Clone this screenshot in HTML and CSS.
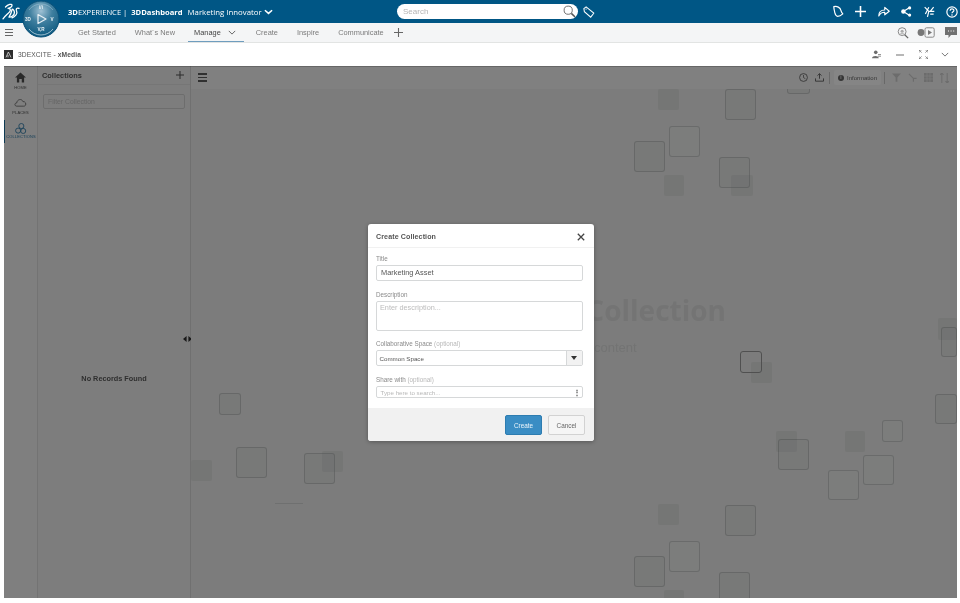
FILE: index.html
```html
<!DOCTYPE html>
<html lang="en">
<head>
<meta charset="utf-8">
<title>3DEXPERIENCE | 3DDashboard</title>
<link rel="stylesheet" href="styles.css">
</head>
<body>
<div class="page">
  <header class="topbar">
    <div class="brand">
      <svg class="ds-logo" viewBox="0 0 20 20" width="20" height="20"><g fill="none" stroke="#fff" stroke-width="1.3" stroke-linecap="round" stroke-linejoin="round"><path d="M4.5 5 C7 2.5 11 1.4 11 3.2 C11 5 8.5 6 7 6.4 C9.5 6.4 10 8 8.6 9.8 C7 11.8 4.4 13.6 2 16.8"/><path d="M11.2 7.2 C10.6 10 9.6 12.6 8 15.2 C11 15.4 13.4 13 13.4 10.4 C13.4 8.4 12 7.2 11.2 7.2"/><path d="M18 6.4 C16 5.6 14.8 6.6 15.4 8.2 C16.2 10 16.4 11 15 12.8 C14 14 12.6 15.2 11 15.8"/></g></svg>
      <svg class="compass" viewBox="0 0 38 38" width="38" height="38">
        <defs><radialGradient id="cg" cx="50%" cy="28%" r="70%"><stop offset="0" stop-color="#9fc1d4"/><stop offset=".45" stop-color="#3f7f9f"/><stop offset="1" stop-color="#0f5a80"/></radialGradient></defs>
        <circle cx="19" cy="19" r="18" fill="url(#cg)" stroke="#0a5078" stroke-width="1"/>
        <path d="M7 10 A15 15 0 0 1 31 10" fill="none" stroke="#cfe0ea" stroke-width=".5" opacity=".7"/>
        <path d="M7 29 A15 15 0 0 0 31 29" fill="none" stroke="#d8e8f0" stroke-width=".7"/>
        <path d="M16 14.5 L24 19 L16 23.5 Z" fill="none" stroke="#e7f0f5" stroke-width="1.2" stroke-linejoin="round"/>
        <text x="6" y="21" class="cp">3D</text><text x="30" y="21" class="cp">V</text><text x="19" y="9" class="cp">i/i</text><text x="19" y="31" class="cp">V,R</text>
      </svg>
    </div>
    <div class="product"><b>3D</b>EXPERIENCE | <b class="dash">3DDashboard</b><span class="dash-name">Marketing Innovator</span>
      <svg class="chev" viewBox="0 0 10 6" width="9" height="6"><path d="M1 1 L5 4.6 L9 1" fill="none" stroke="#fff" stroke-width="1.7"/></svg>
    </div>
    <div class="search"><span>Search</span>
      <svg viewBox="0 0 14 14" width="13" height="13"><circle cx="5.6" cy="5.6" r="4.4" fill="none" stroke="#666" stroke-width="1"/><path d="M9 9 L13 13" stroke="#555" stroke-width="1.6"/></svg>
    </div>
    <svg class="tag" viewBox="0 0 14 14" width="12" height="12"><path d="M1 3 L3.6 1 L12.6 8.4 L9 13 L1.6 6.6 Z" fill="none" stroke="#fff" stroke-width="1.2"/><circle cx="3.6" cy="3.6" r=".7" fill="#fff"/></svg>
    <div class="top-icons">
      <svg viewBox="0 0 16 16" width="12" height="13"><path d="M2.4 1.6 C6.6 .4 11 2.6 12 6.8 C12.4 8.6 13.4 10 14.4 11.2 C12.4 13 9.8 14.4 7.4 14.4 C5 14.4 4.4 12 3.8 9.8 C3.2 7.4 2.4 4 2.4 1.6 Z" fill="none" stroke="#fff" stroke-width="1.6" stroke-linejoin="round"/></svg>
      <svg viewBox="0 0 14 14" width="11" height="11"><path d="M7 0 V14 M0 7 H14" stroke="#fff" stroke-width="2"/></svg>
      <svg viewBox="0 0 16 14" width="12" height="11"><path d="M1 13 C1 7 4 5 9 5 V1.5 L15 6.6 L9 11.4 V8 C6 8 3 9 1 13 Z" fill="none" stroke="#fff" stroke-width="1.5" stroke-linejoin="round"/></svg>
      <svg viewBox="0 0 14 14" width="11" height="11"><path d="M3 7 L11 2 M3 7 L11 12" stroke="#fff" stroke-width="1.6"/><circle cx="3" cy="7" r="2.8" fill="#fff"/><circle cx="11" cy="2.4" r="2" fill="#fff"/><circle cx="11" cy="11.6" r="2" fill="#fff"/></svg>
      <svg viewBox="0 0 16 16" width="11" height="12"><path d="M1 1 L7 7 M7 1 L2 11 M7 7 L5 15 M7 7 H15 M9 7 L14 1 M9 11 H14" fill="none" stroke="#fff" stroke-width="1.7"/></svg>
      <svg viewBox="0 0 14 14" width="12" height="12"><circle cx="7" cy="7" r="6" fill="none" stroke="#fff" stroke-width="1.4"/><path d="M4.8 5.4 C4.8 2.8 9.2 2.8 9.2 5.2 C9.2 6.8 7 6.8 7 8.6" fill="none" stroke="#fff" stroke-width="1.4"/><circle cx="7" cy="10.6" r=".9" fill="#fff"/></svg>
    </div>
  </header>

  <nav class="tabs">
    <div class="burger"><i></i><i></i><i></i></div>
    <ul class="tab-list">
      <li>Get Started</li>
      <li>What´s New</li>
      <li class="active">Manage<svg viewBox="0 0 10 6" width="8" height="5"><path d="M1 1 L5 5 L9 1" fill="none" stroke="#555" stroke-width="1.1"/></svg></li>
      <li>Create</li>
      <li>Inspire</li>
      <li>Communicate</li>
      <li class="add"><svg viewBox="0 0 10 10" width="9" height="9"><path d="M5 0 V10 M0 5 H10" stroke="#666" stroke-width="1.2"/></svg></li>
    </ul>
    <div class="tab-tools">
      <svg viewBox="0 0 14 14" width="12" height="12"><circle cx="6" cy="5.4" r="4.6" fill="none" stroke="#777" stroke-width="1"/><path d="M9 9 L13 13" stroke="#666" stroke-width="1.5"/><circle cx="6" cy="5" r="1.8" fill="#aaa"/><path d="M2.6 8.6 C3.6 6.8 8.4 6.8 9.4 8.6" fill="#aaa"/></svg>
      <svg viewBox="0 0 18 11" width="18" height="11"><circle cx="4" cy="5.5" r="3.4" fill="#777"/><rect x="8" y=".8" width="9.2" height="9.4" rx="1.5" fill="none" stroke="#888" stroke-width="1"/><path d="M11 3 L15 5.5 L11 8 Z" fill="#777"/></svg>
      <svg viewBox="0 0 12 11" width="12" height="11"><path d="M0 0 H12 V8 H6 L3.5 11 V8 H0 Z" fill="#707070"/><path d="M3 4 H4 M5.6 4 H6.6 M8.2 4 H9.2" stroke="#fff" stroke-width="1"/></svg>
    </div>
  </nav>

  <div class="widget-head">
    <svg viewBox="0 0 9 9" width="9" height="9"><rect width="9" height="9" fill="#2d2d2d"/><path d="M2 7.4 L4.4 2 L7 7.4 M4 7.4 V5" fill="none" stroke="#ddd" stroke-width=".8"/></svg>
    <span class="widget-title">3DEXCITE - <b>xMedia</b></span>
    <div class="widget-tools">
      <svg viewBox="0 0 12 11" width="9" height="9"><circle cx="5" cy="2.6" r="2.4" fill="#6c6c6c"/><path d="M0 10.6 C0 6.4 9 6.4 9 10.6 Z" fill="#6c6c6c"/><path d="M8 5.6 L12 5.6 M8 7.8 L12 7.8" stroke="#6c6c6c" stroke-width="1"/></svg>
      <svg viewBox="0 0 9 2" width="8" height="2"><path d="M0 1 H9" stroke="#777" stroke-width="1.2"/></svg>
      <svg viewBox="0 0 9 9" width="9" height="9"><path d="M0 2.6 V0 H2.6 M6.4 0 H9 V2.6 M9 6.4 V9 H6.4 M2.6 9 H0 V6.4 M0 0 L2.6 2.6 M9 0 L6.4 2.6 M9 9 L6.4 6.4 M0 9 L2.6 6.4" fill="none" stroke="#777" stroke-width=".8"/></svg>
      <svg class="widget-chev" viewBox="0 0 10 6" width="8" height="5"><path d="M1 1 L5 5 L9 1" fill="none" stroke="#666" stroke-width="1.1"/></svg>
    </div>
  </div>

  <main class="app">
    <aside class="rail">
      <div class="rail-item">
        <svg viewBox="0 0 14 14" width="11" height="11"><path d="M7 .6 L14 7 H11.6 V13.4 H8.6 V9 H5.4 V13.4 H2.4 V7 H0 Z" fill="#505050"/></svg>
        <span>HOME</span>
      </div>
      <div class="rail-item">
        <svg viewBox="0 0 16 11" width="13" height="11"><path d="M3.4 10 C.4 10 .4 6 3.4 6 C3.6 1.6 9.6 .2 11 4.4 C15 3.8 16 10 12 10 Z" fill="none" stroke="#555" stroke-width=".9"/></svg>
        <span>PLACES</span>
      </div>
      <div class="rail-item selected">
        <svg viewBox="0 0 14 13" width="12" height="11"><g fill="none" stroke="#2b79a8" stroke-width="1"><circle cx="7.4" cy="3.6" r="3"/><circle cx="3.6" cy="9" r="3"/><circle cx="9.6" cy="9.4" r="3"/></g></svg>
        <span>COLLECTIONS</span>
      </div>
    </aside>

    <section class="collections">
      <div class="coll-head"><h2>Collections</h2><svg viewBox="0 0 10 10" width="8" height="8"><path d="M5 0 V10 M0 5 H10" stroke="#555" stroke-width="1.3"/></svg></div>
      <div class="filter">Filter Collection</div>
      <p class="empty">No Records Found</p>
      <svg class="resizer" viewBox="0 0 9 6" width="9" height="6"><path d="M0 3 L3.6 0 V6 Z M9 3 L5.4 0 V6 Z" fill="#333"/></svg>
    </section>

    <section class="stage">
      <div class="stage-bar">
        <div class="burger big"><i></i><i></i><i></i></div>
        <div class="stage-tools">
          <svg viewBox="0 0 11 11" width="9" height="9"><circle cx="5.5" cy="5.5" r="4.8" fill="none" stroke="#5c5c5c" stroke-width="1"/><path d="M5.5 2.4 V5.6 L7.8 7" fill="none" stroke="#5c5c5c" stroke-width=".9"/></svg>
          <svg viewBox="0 0 11 11" width="9" height="9"><path d="M5.5 7 V1 M3 3.2 L5.5 .8 L8 3.2 M.6 6.6 V10 H10.4 V6.6" fill="none" stroke="#5c5c5c" stroke-width="1.1"/></svg>
          <i class="sep"></i>
          <div class="info-btn"><b>i</b>Information</div>
          <i class="sep"></i>
          <svg viewBox="0 0 10 10" width="9" height="9"><path d="M0 .6 H10 L6 5 V9.6 H4 V5 Z" fill="#d0d0d0"/></svg>
          <svg viewBox="0 0 10 10" width="9" height="9"><path d="M1 1 L6 6 M6 6 H9.6 M6 6 V9.6" stroke="#d0d0d0" stroke-width="1.4" fill="none"/></svg>
          <svg viewBox="0 0 10 10" width="9" height="9"><path d="M0 0 H10 V10 H0 Z" fill="#d0d0d0"/><path d="M3.3 0 V10 M6.6 0 V10 M0 3.3 H10 M0 6.6 H10" stroke="#f6f6f6" stroke-width=".6"/></svg>
          <svg viewBox="0 0 10 11" width="9" height="10"><path d="M2 0 V11 M0 2 L2 0 L4 2 M8 11 V0 M6 9 L8 11 L10 9" fill="none" stroke="#d0d0d0" stroke-width="1.2"/></svg>
        </div>
      </div>
      <div class="hero">
        <h1>Collection</h1>
        <p>content</p>
      </div>

      <span class="sq f" style="left:467px;top:23px;width:21px;height:21px"></span>
      <span class="sq o" style="left:534px;top:23px;width:31px;height:31px"></span>
      <span class="sq o lt" style="left:478px;top:60px;width:31px;height:31px"></span>
      <span class="sq o" style="left:443px;top:75px;width:31px;height:31px"></span>
      <span class="sq o" style="left:528px;top:91px;width:31px;height:31px"></span>
      <span class="sq f" style="left:540px;top:109px;width:22px;height:21px"></span>
      <span class="sq f" style="left:473px;top:109px;width:20px;height:21px"></span>
      <span class="sq o" style="left:596px;top:0;width:23px;height:28px"></span>

      <span class="sq o dk" style="left:549px;top:285px;width:22px;height:22px"></span>
      <span class="sq f" style="left:560px;top:296px;width:21px;height:21px"></span>
      <span class="sq f" style="left:747px;top:252px;width:19px;height:22px"></span>
      <span class="sq o" style="left:750px;top:261px;width:16px;height:30px"></span>
      <span class="sq o" style="left:744px;top:328px;width:22px;height:30px"></span>
      <span class="sq o lt" style="left:691px;top:354px;width:21px;height:22px"></span>
      <span class="sq f" style="left:585px;top:365px;width:21px;height:21px"></span>
      <span class="sq o" style="left:587px;top:373px;width:31px;height:31px"></span>
      <span class="sq f" style="left:654px;top:365px;width:20px;height:21px"></span>
      <span class="sq o lt" style="left:672px;top:389px;width:31px;height:30px"></span>
      <span class="sq o lt" style="left:637px;top:404px;width:31px;height:30px"></span>

      <span class="sq o" style="left:28px;top:327px;width:22px;height:22px"></span>
      <span class="sq o" style="left:45px;top:381px;width:31px;height:31px"></span>
      <span class="sq o" style="left:113px;top:387px;width:31px;height:31px"></span>
      <span class="sq f" style="left:131px;top:385px;width:21px;height:21px"></span>
      <span class="sq f" style="left:0;top:394px;width:21px;height:21px"></span>
      <span class="rule" style="left:84px;top:437px;width:28px"></span>

      <span class="sq f" style="left:467px;top:438px;width:21px;height:21px"></span>
      <span class="sq o" style="left:534px;top:439px;width:31px;height:31px"></span>
      <span class="sq o lt" style="left:478px;top:475px;width:31px;height:31px"></span>
      <span class="sq o" style="left:443px;top:490px;width:31px;height:31px"></span>
      <span class="sq o" style="left:528px;top:506px;width:31px;height:31px"></span>
      <span class="sq f" style="left:473px;top:524px;width:20px;height:21px"></span>
    </section>

    <div class="scrim"></div>

    <form class="dialog">
      <div class="dlg-head"><h3>Create Collection</h3><svg viewBox="0 0 10 10" width="8" height="8"><path d="M1 1 L9 9 M9 1 L1 9" stroke="#444" stroke-width="1.6"/></svg></div>
      <div class="dlg-body">
        <label>Title</label>
        <div class="field title-field">Marketing Asset</div>
        <label>Description</label>
        <div class="field desc-field">Enter description...</div>
        <label>Collaborative Space <em>(optional)</em></label>
        <div class="field select-field"><span>Common Space</span><i class="caret"></i></div>
        <label>Share with <em>(optional)</em></label>
        <div class="field share-field"><span>Type here to search...</span><b>⋮</b></div>
      </div>
      <div class="dlg-foot"><button type="button" class="primary">Create</button><button type="button">Cancel</button></div>
    </form>
  </main>
</div>
</body>
</html>
```
FILE: styles.css
```css
* { box-sizing: border-box; }
html, body { margin: 0; padding: 0; height: 100%; background: #fff; }
body { font-family: "Liberation Sans", Arial, sans-serif; color: #333; overflow: hidden; }
.page { width: 960px; height: 603px; display: flex; flex-direction: column; filter: blur(.45px); }

.topbar { height: 23px; flex: none; background: #005685; display: flex; align-items: center; position: relative; z-index: 3; color: #fff; }
.brand { width: 68px; flex: none; position: relative; height: 23px; }
.ds-logo { position: absolute; left: 1px; top: 2px; }
.compass { position: absolute; left: 22px; top: 0; }
.cp { font: bold 4.6px "Liberation Sans", sans-serif; fill: #eaf2f6; text-anchor: middle; }
.product { width: 329px; flex: none; font-family: "Open Sans", sans-serif; font-size: 7.6px; white-space: pre; display: flex; align-items: center; }
.product b { font-weight: 700; }
.product .dash { margin-left: 2px; }
.dash-name { margin-left: 5px; margin-right: 2px; font-size: 7.8px; }
.search { width: 181px; height: 15px; flex: none; background: #fff; border-radius: 8px; display: flex; align-items: center; justify-content: space-between; padding: 0 2px 0 6px; color: #b5b5b5; font-size: 8px; }
.tag { margin-left: 5px; flex: none; }
.top-icons { margin-left: auto; width: 128px; padding-right: 2px; display: flex; align-items: center; justify-content: space-between; }

.tabs { height: 20px; flex: none; background: #f4f5f6; border-bottom: 1px solid #e2e4e3; display: flex; align-items: center; position: relative; z-index: 1; }
.burger { width: 8px; margin-left: 5px; display: flex; flex-direction: column; gap: 2px; }
.burger i { display: block; height: 1px; background: #666; }
.tab-list { list-style: none; margin: 0 0 0 65px; padding: 0; display: flex; height: 100%; font-size: 7.4px; color: #7b7b7b; }
.tab-list li { display: flex; align-items: center; margin-right: 19px; }
.tab-list li.active { color: #444; border-bottom: 1.5px solid #6f9dbe; padding: 0 8px 0 6px; margin: 0 12px 0 -6px; gap: 7px; }
.tab-list li.add { margin: 0 0 0 -8.5px; }
.tab-tools { margin-left: auto; display: flex; align-items: center; gap: 10px; padding-right: 3px; }
.tab-tools svg:first-child { margin-right: -2px; }

.widget-head { height: 23px; flex: none; display: flex; align-items: center; padding: 0 11px 0 4px; background: #fff; }
.widget-title { margin-left: 5px; font-size: 6.7px; color: #555; letter-spacing: .1px; }
.widget-tools { margin-left: auto; display: flex; align-items: center; gap: 15px; }
.widget-chev { margin-left: -2px; }

.app { position: relative; margin: 0 3px 0 4px; height: 532px; display: flex; overflow: hidden; background: #fff; }
.rail { width: 34px; flex: none; background: #f4f4f4; border-right: 1px solid #dcdcdc; display: flex; flex-direction: column; padding-top: 6px; }
.rail-item { height: 25px; display: flex; flex-direction: column; align-items: center; gap: 2px; font-size: 4px; color: #555; letter-spacing: .1px; white-space: nowrap; }
.rail-item.selected { color: #2b79a8; border-left: 1px solid #1b6fa0; margin-top: -2px; padding-top: 3px; height: 23px; gap: 0; }
.collections { width: 153px; flex: none; position: relative; background: #f0f0f0; border-right: 1px solid #d6d6d6; }
.coll-head { height: 19px; display: flex; align-items: center; justify-content: space-between; padding: 0 6px 0 4px; border-bottom: 1px solid #e2e2e2; }
.coll-head h2 { margin: 0; font-size: 7.4px; font-weight: 700; color: #5a5a5a; }
.filter { margin: 9px 5px 0 5px; height: 15px; border: 1px solid #d2d2d2; border-radius: 2px; font-size: 6.8px; color: #c4c4c4; padding: 0 4px; line-height: 13px; }
.empty { margin: 0; text-align: center; font-weight: 700; font-size: 7.3px; color: #5a5a5a; padding-top: 265px; }
.resizer { position: absolute; right: -2px; top: 270px; }

.stage { flex: 1; position: relative; background: #edeeed; display: flex; flex-direction: column; overflow: hidden; }
.stage-bar { height: 23px; flex: none; background: #f6f6f6; display: flex; align-items: center; padding: 0 8px 0 7px; position: relative; z-index: 1; }
.burger.big { width: 9px; margin-left: 0; gap: 2px; }
.burger.big i { height: 1.5px; background: #5c5c5c; }
.stage-tools { margin-left: auto; display: flex; align-items: center; gap: 7px; }
.sep { width: 1px; height: 12px; background: #c8c8c8; }
.sep:first-of-type { margin-left: -2px; }
.info-btn { height: 15px; width: 47px; margin: 0 -4px 0 -3px; background: #fff; border-radius: 2px; display: flex; align-items: center; justify-content: center; gap: 3px; font-size: 6px; color: #6a6a6a; }
.info-btn b { width: 6px; height: 6px; border-radius: 50%; background: #666; color: #eee; font-size: 4.6px; line-height: 6px; text-align: center; }
.hero { margin: 203px 0 0 394px; width: 141px; }
.hero h1 { margin: 0; font-family: "Open Sans", sans-serif; font-size: 28px; font-weight: 700; line-height: 36px; color: #dedfdf; white-space: nowrap; text-align: right; }
.hero p { margin: 12px 0 0; font-size: 13px; color: #dcdddd; line-height: 16px; padding-left: 9px; }
.sq { position: absolute; display: block; border-radius: 2px; }
.sq.f { background: rgba(150,155,155,.14); }
.sq.o { border: 1px solid rgba(120,125,125,.3); border-radius: 3px; background: rgba(150,155,155,.07); }
.sq.o.lt { background: rgba(255,255,255,.1); }
.sq.o.dk { border-color: #9a9a9a; background: none; }
.rule { position: absolute; height: 1px; background: #d5d7d7; }

.scrim { position: absolute; inset: 0; background: rgba(0,0,0,.48); border-top: 1px solid rgba(0,0,0,.2); z-index: 2; }

.dialog { position: absolute; z-index: 4; left: 364px; top: 158px; width: 226px; height: 217px; background: #fff; border-radius: 3px; display: flex; flex-direction: column; box-shadow: 0 1px 4px rgba(0,0,0,.3); overflow: hidden; }
.dlg-head { height: 24px; flex: none; display: flex; align-items: center; justify-content: space-between; padding: 2px 9px 0 8px; border-bottom: 1px solid #f1f1f1; }
.dlg-head h3 { margin: 0; font-size: 7.1px; font-weight: 700; color: #555; letter-spacing: .1px; }
.dlg-body { flex: 1; padding: 6px 11px 0 8px; display: flex; flex-direction: column; }
.dlg-body label { font-size: 6.3px; color: #8a8a8a; line-height: 9px; height: 9px; }
.dlg-body em { font-style: normal; color: #b8b8b8; }
.field { border: 1px solid #d6d8d9; border-radius: 2px; background: #fff; margin-top: 2px; flex: none; }
.title-field { height: 16px; font-size: 7.4px; color: #555; padding: 0 4px; line-height: 14px; margin-bottom: 9px; }
.desc-field { height: 30px; font-size: 7.3px; color: #bcbcbc; padding: 1px 3px; line-height: 10px; margin-bottom: 8px; }
.select-field { height: 16px; display: flex; align-items: center; justify-content: space-between; font-size: 6.2px; color: #555; padding-left: 2.5px; margin-bottom: 9px; overflow: hidden; }
.caret { width: 16px; height: 100%; background: #f2f2f2; border-left: 1px solid #d6d8d9; position: relative; display: block; }
.caret::after { content: ""; position: absolute; left: 4px; top: 5px; border: 3.5px solid transparent; border-top: 4px solid #333; border-bottom: 0; }
.share-field { height: 12px; display: flex; align-items: center; justify-content: space-between; font-size: 6.2px; color: #b8b8b8; padding: 0 1px 0 3.5px; }
.share-field b { color: #555; font-size: 8px; font-weight: 700; }
.dlg-foot { height: 33px; flex: none; background: #f1f1f1; display: flex; justify-content: flex-end; align-items: center; gap: 6px; padding: 1px 9px 0 0; }
.dlg-foot button { height: 20px; width: 37px; border: 1px solid #d2d2d2; border-radius: 2px; background: #f5f5f5; font: 6.4px "Liberation Sans", sans-serif; color: #666; padding: 0; }
.dlg-foot button.primary { background: #3a8dc4; border-color: #2d7cb0; color: #eaf4fa; }
```
